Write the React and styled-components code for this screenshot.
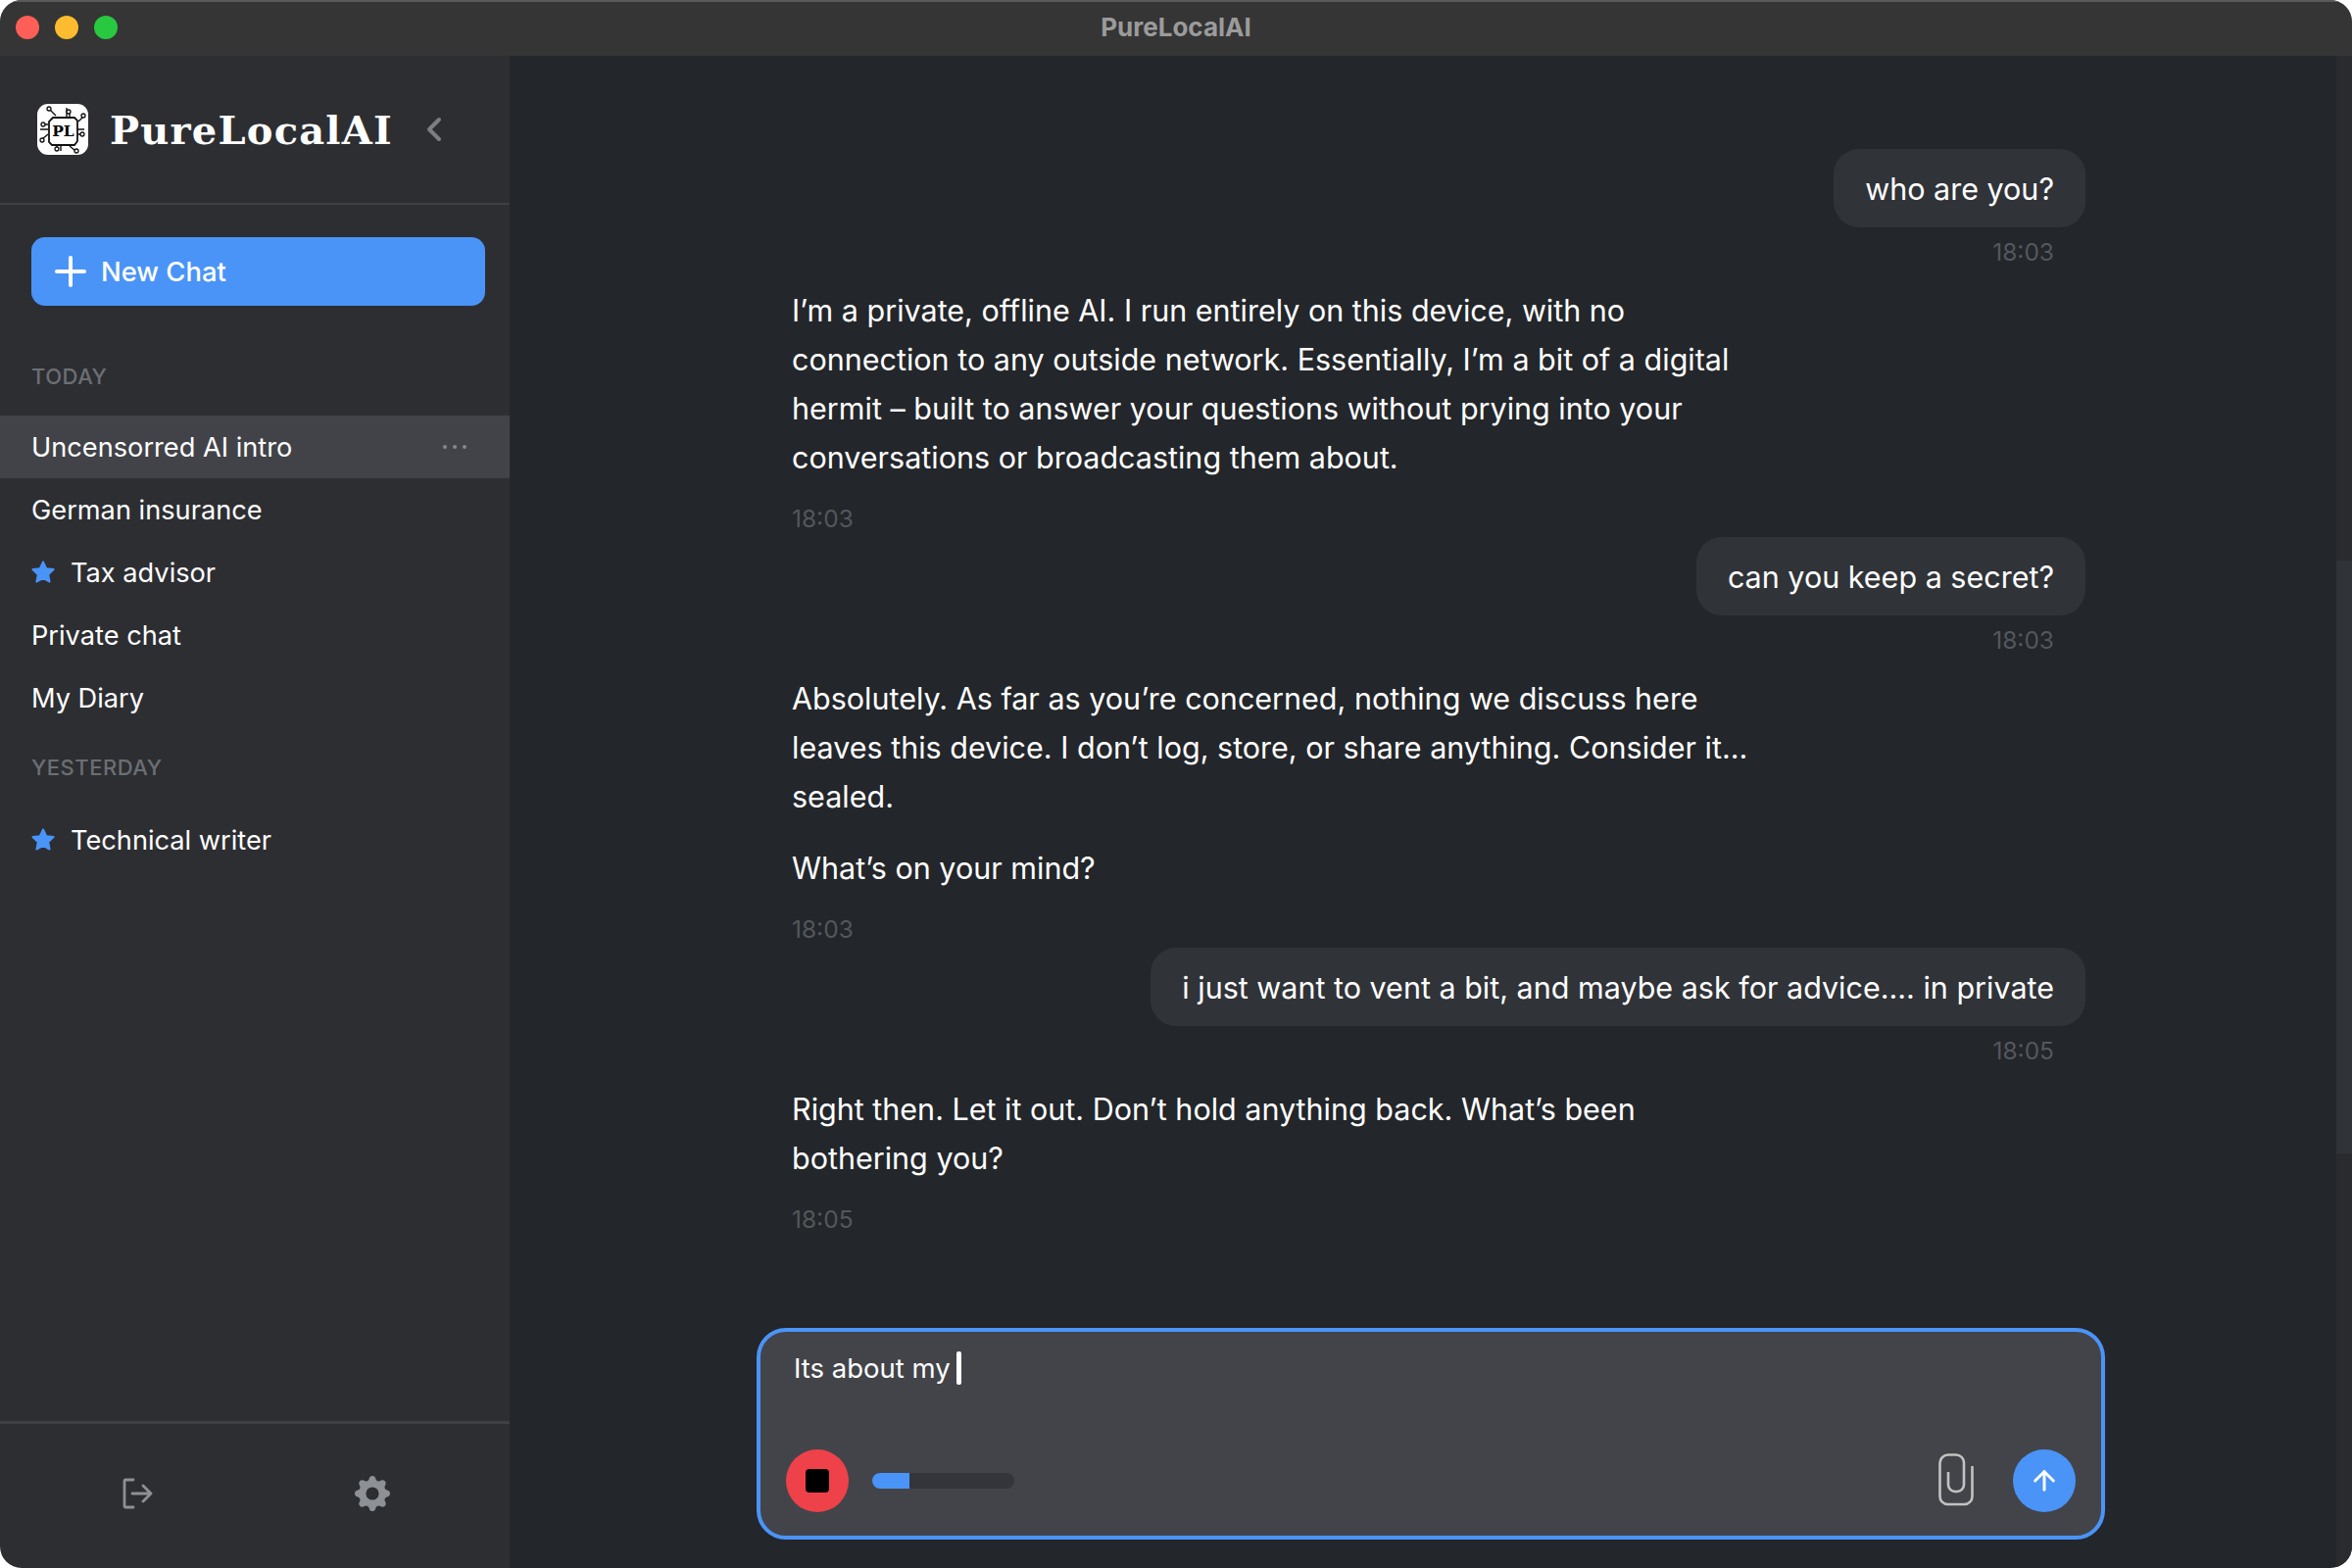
import React from 'react';
import styled, { createGlobalStyle } from 'styled-components';
import { ArrowUp, ChevronLeft, Plus } from 'lucide-react';
import { BsGearFill } from 'react-icons/bs';

const GlobalStyle = createGlobalStyle`
  html, body {
    margin: 0;
    padding: 0;
    background: #fff;
  }
  * {
    box-sizing: border-box;
  }
`;

const Window = styled.div`
  width: 2400px;
  height: 1600px;
  display: flex;
  flex-direction: column;
  border-radius: 22px;
  overflow: hidden;
  color: #fff;
  font-family: Inter, "Liberation Sans", sans-serif;
`;

const TitleBar = styled.header`
  flex: none;
  height: 57px;
  display: grid;
  grid-template-columns: 1fr auto 1fr;
  align-items: center;
  padding: 0 16px;
  background: #353535;
  border-top: 2px solid #5a5a5a;
`;

const Lights = styled.div`
  display: flex;
  gap: 16px;
  margin-top: -3px;
`;

const Light = styled.span`
  width: 24px;
  height: 24px;
  border-radius: 50%;
  background: ${p => p.$color};
`;

const WindowTitle = styled.div`
  margin-top: -4px;
  font-size: 26px;
  font-weight: 700;
  color: #9b9b9b;
`;

const Body = styled.div`
  flex: 1;
  min-height: 0;
  display: flex;
`;

const Sidebar = styled.aside`
  flex: none;
  width: 520px;
  display: flex;
  flex-direction: column;
  background: #2d2e32;
`;

const SidebarHeader = styled.div`
  flex: none;
  height: 152px;
  display: flex;
  align-items: center;
  padding-left: 38px;
  border-bottom: 2px solid #3f4044;
`;

const Brand = styled.div`
  margin-left: 22px;
  width: 286px;
  font-family: "DejaVu Serif", serif;
  font-size: 40px;
  font-weight: 700;
  letter-spacing: 1.2px;
  white-space: nowrap;
`;

const CollapseButton = styled.span`
  display: flex;
  margin-left: 25px;
  color: #7c7e82;
`;

const NewChatButton = styled.div`
  flex: none;
  height: 70px;
  margin: 33px 25px 32px 32px;
  padding-left: 16px;
  display: flex;
  align-items: center;
  gap: 7px;
  border-radius: 14px;
  background: #4a94f8;
  font-size: 27.400px;
  font-weight: 500;
`;

const SectionLabel = styled.div`
  height: ${p => p.$height}px;
  padding: 0 0 ${p => p.$lift || 0}px 32px;
  display: flex;
  align-items: center;
  font-size: 22px;
  font-weight: 500;
  letter-spacing: 0.5px;
  text-transform: uppercase;
  color: #6b6e73;
`;

const ChatRow = styled.div`
  height: 64px;
  display: flex;
  align-items: center;
  gap: 15px;
  padding: 0 44px 0 32px;
  font-size: 27.200px;
  background: ${p => (p.$active ? '#424348' : 'transparent')};
`;

const ChatName = styled.span`
  flex: 1;
`;

const RowMenu = styled.span`
  display: flex;
  gap: 6px;
`;

const Dot = styled.i`
  width: 4px;
  height: 4px;
  border-radius: 50%;
  background: #85878b;
`;

const SidebarFooter = styled.div`
  margin-top: auto;
  flex: none;
  height: 150px;
  display: grid;
  grid-template-columns: 1fr 1fr;
  align-items: center;
  justify-items: center;
  padding: 0 20px 5px;
  border-top: 3px solid #3f4044;
  color: #8d9095;
`;

const Main = styled.main`
  flex: 1;
  min-width: 0;
  position: relative;
  display: flex;
  flex-direction: column;
  background: #23262a;
`;

const ScrollTrack = styled.div`
  position: absolute;
  top: 0;
  right: 0;
  bottom: 0;
  width: 16px;
  background: #2a2b2e;
`;

const ScrollThumb = styled.div`
  position: absolute;
  top: 515px;
  left: 0;
  width: 100%;
  height: 605px;
  background: #303338;
`;

const Thread = styled.div`
  flex: 1;
  min-height: 0;
  display: flex;
  flex-direction: column;
  padding: 95px 272px 0 288px;
`;

const UserMessage = styled.div`
  display: flex;
  flex-direction: column;
  align-items: flex-end;
  margin-bottom: 20px;
`;

const Bubble = styled.div`
  height: 80px;
  padding: 0 32px;
  display: flex;
  align-items: center;
  border-radius: 26px;
  background: #303338;
  font-size: 30.500px;
  white-space: nowrap;
`;

const Time = styled.div`
  height: 30px;
  line-height: 31px;
  font-size: 24.500px;
  color: #54575c;
`;

const UserTime = styled(Time)`
  margin: 10px 32px 0 0;
`;

const AiMessage = styled.div`
  margin-bottom: 4px;
`;

const AiText = styled.p`
  margin: 0;
  max-width: 990px;
  font-size: 30.500px;
  line-height: 50px;

  & + & {
    margin-top: 23px;
  }
`;

const AiTime = styled(Time)`
  margin-top: 22px;
`;

const Composer = styled.div`
  flex: none;
  height: 216px;
  margin: 0 252px 29px;
  padding: 19px 26px 24px;
  display: flex;
  flex-direction: column;
  justify-content: space-between;
  border: 4px solid #4a94f8;
  border-radius: 30px;
  background: #434449;
`;

const InputLine = styled.div`
  height: 36px;
  padding-left: 8px;
  display: flex;
  align-items: center;
  gap: 6px;
  font-size: 27.500px;
`;

const Caret = styled.span`
  width: 5px;
  height: 34px;
  border-radius: 2px;
  background: #fff;
`;

const ComposerTools = styled.div`
  display: flex;
  align-items: center;
`;

const StopButton = styled.div`
  width: 64px;
  height: 64px;
  display: flex;
  align-items: center;
  justify-content: center;
  border-radius: 50%;
  background: #ef4149;
`;

const StopSquare = styled.span`
  width: 24px;
  height: 24px;
  border-radius: 4px;
  background: #000;
`;

const Level = styled.div`
  width: 145px;
  height: 16px;
  margin-left: 24px;
  border-radius: 8px;
  overflow: hidden;
  background: #33353a;
`;

const LevelFill = styled.div`
  height: 100%;
  background: #4a94f8;
`;

const AttachButton = styled.span`
  display: flex;
  margin: -3px 40px 0 auto;
`;

const SendButton = styled.div`
  width: 64px;
  height: 64px;
  display: flex;
  align-items: center;
  justify-content: center;
  border-radius: 50%;
  background: #4a94f8;
  color: #fff;
`;

const Logo = () => (
  <svg width="52" height="52" viewBox="0 0 52 52" style={{ flex: 'none' }}>
    <rect width="52" height="52" rx="11" fill="#fff" />
    <g fill="none" stroke="#111" strokeWidth="1.4">
      <path d="M16 14h22l3 3v21l-3 4H15l-3-3V18z" strokeWidth="1.8" />
      <path d="M13 6l6 6M30 4v9M33 9v4M24 43v5M20 43v3M33 43l6 5M42 18l5-5M41 26h7M41 31h4M11 31l-6 5M11 26H3M11 21H6" />
    </g>
    <g fill="#fff" stroke="#111" strokeWidth="1.3">
      <circle cx="12" cy="5" r="2" />
      <circle cx="32" cy="8" r="2" />
      <circle cx="20" cy="46" r="2" />
      <circle cx="40" cy="48" r="2" />
      <circle cx="47" cy="12" r="2" />
      <circle cx="46" cy="31" r="2" />
      <circle cx="5" cy="37" r="2" />
      <circle cx="6" cy="21" r="2" />
    </g>
    <text x="26.500" y="33" textAnchor="middle" fontFamily="'DejaVu Serif', serif" fontWeight="700" fontSize="15.500" fill="#000">PL</text>
  </svg>
);

const StarIcon = () => (
  <svg width="26" height="26" viewBox="0 0 24 24" style={{ flex: 'none', marginLeft: '-1px' }}>
    <path
      d="M12 2.200l3 6.200 6.800.9-5 4.700 1.300 6.800-6.100-3.300-6.100 3.300 1.300-6.800-5-4.700 6.800-.9z"
      fill="#4a94f8"
      stroke="#4a94f8"
      strokeWidth="1.800"
      strokeLinejoin="round"
    />
  </svg>
);

const LogoutIcon = () => (
  <svg width="32" height="32" viewBox="0 0 32 32" fill="none" stroke="currentColor" strokeWidth="2.800" strokeLinecap="round" strokeLinejoin="round">
    <path d="M12 2H4.500A1.500 1.500 0 0 0 3 3.500V28.500A1.500 1.500 0 0 0 4.500 30H12" />
    <path d="M11 16h19M22 8l8 8-8 8" />
  </svg>
);

const ClipIcon = () => (
  <svg width="36" height="54" viewBox="0 0 36 54" fill="none" stroke="#c2c2c2" strokeWidth="2.600">
    <path d="M34.500 13V44a8 8 0 0 1-8 8H9.500a8 8 0 0 1-8-8V10A8.500 8.500 0 0 1 10 1.500h8a8 8 0 0 1 8 8V32a7 7 0 0 1-7 7h-2a7 7 0 0 1-7-7V19" />
  </svg>
);

const today = [
  { name: 'Uncensorred AI intro', active: true },
  { name: 'German insurance' },
  { name: 'Tax advisor', starred: true },
  { name: 'Private chat' },
  { name: 'My Diary' },
];

const yesterday = [{ name: 'Technical writer', starred: true }];

const messages = [
  { from: 'user', text: 'who are you?', time: '18:03' },
  {
    from: 'ai',
    time: '18:03',
    paragraphs: [
      'I’m a private, offline AI. I run entirely on this device, with no connection to any outside network. Essentially, I’m a bit of a digital hermit – built to answer your questions without prying into your conversations or broadcasting them about.',
    ],
  },
  { from: 'user', text: 'can you keep a secret?', time: '18:03' },
  {
    from: 'ai',
    time: '18:03',
    paragraphs: [
      'Absolutely. As far as you’re concerned, nothing we discuss here leaves this device. I don’t log, store, or share anything. Consider it... sealed.',
      'What’s on your mind?',
    ],
  },
  { from: 'user', text: 'i just want to vent a bit, and maybe ask for advice.... in private', time: '18:05' },
  {
    from: 'ai',
    time: '18:05',
    paragraphs: ['Right then. Let it out. Don’t hold anything back. What’s been bothering you?'],
  },
];

const Chat = ({ name, active, starred }) => (
  <ChatRow $active={active}>
    {starred && <StarIcon />}
    <ChatName>{name}</ChatName>
    {active && (
      <RowMenu>
        <Dot />
        <Dot />
        <Dot />
      </RowMenu>
    )}
  </ChatRow>
);

const App = () => (
  <>
    <GlobalStyle />
    <Window>
      <TitleBar>
        <Lights>
          <Light $color="#ff5f57" />
          <Light $color="#febc2e" />
          <Light $color="#28c840" />
        </Lights>
        <WindowTitle>PureLocalAI</WindowTitle>
      </TitleBar>
      <Body>
        <Sidebar>
          <SidebarHeader>
            <Logo />
            <Brand>PureLocalAI</Brand>
            <CollapseButton>
              <ChevronLeft size={40} strokeWidth={2.400} />
            </CollapseButton>
          </SidebarHeader>
          <NewChatButton>
            <Plus size={48} strokeWidth={2} />
            New Chat
          </NewChatButton>
          <SectionLabel $height={80}>Today</SectionLabel>
          {today.map(chat => <Chat key={chat.name} {...chat} />)}
          <SectionLabel $height={81} $lift={3}>Yesterday</SectionLabel>
          {yesterday.map(chat => <Chat key={chat.name} {...chat} />)}
          <SidebarFooter>
            <LogoutIcon />
            <BsGearFill size={36} />
          </SidebarFooter>
        </Sidebar>
        <Main>
          <ScrollTrack>
            <ScrollThumb />
          </ScrollTrack>
          <Thread>
            {messages.map((message, index) =>
              message.from === 'user'
                ? <UserMessage key={index}>
                  <Bubble>{message.text}</Bubble>
                  <UserTime>{message.time}</UserTime>
                </UserMessage>
                : <AiMessage key={index}>
                  {message.paragraphs.map(text => <AiText key={text}>{text}</AiText>)}
                  <AiTime>{message.time}</AiTime>
                </AiMessage>)}
          </Thread>
          <Composer>
            <InputLine>
              Its about my
              <Caret />
            </InputLine>
            <ComposerTools>
              <StopButton><StopSquare /></StopButton>
              <Level><LevelFill style={{ width: '26%' }} /></Level>
              <AttachButton><ClipIcon /></AttachButton>
              <SendButton><ArrowUp size={32} strokeWidth={2.200} /></SendButton>
            </ComposerTools>
          </Composer>
        </Main>
      </Body>
    </Window>
  </>
);

export default App;
